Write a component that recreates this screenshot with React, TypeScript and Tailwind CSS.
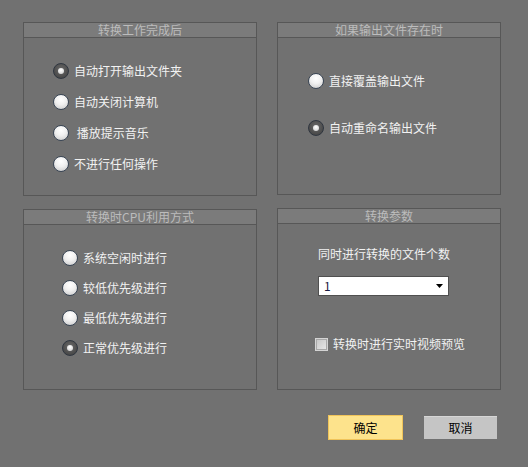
import { useState } from "react";

const font = { fontFamily: '"Noto Sans CJK SC", "Noto Sans", sans-serif' };

function Radio({ checked, label, onClick }: { checked: boolean; label: string; onClick: () => void }) {
  return (
    <div className="flex items-center cursor-default" onClick={onClick}>
      {checked ? (
        <span className="flex h-[16px] w-[16px] items-center justify-center rounded-full border border-[#2f3640] bg-[radial-gradient(circle_at_50%_40%,#6a6a6a,#3c3c3c)]">
          <span className="h-[6px] w-[6px] rounded-full bg-[radial-gradient(circle_at_50%_35%,#ffffff,#c8c8c8)]" />
        </span>
      ) : (
        <span className="h-[16px] w-[16px] rounded-full border border-[#3a4656] bg-[radial-gradient(circle_at_50%_30%,#ffffff,#f0f0f0_45%,#c6c6c6)]" />
      )}
      <span className="ml-[5px] whitespace-pre text-[12px] leading-[16px] text-[#f2f2f2]">{label}</span>
    </div>
  );
}

function Panel({ title, className, children }: { title: string; className: string; children: React.ReactNode }) {
  return (
    <div className={`flex flex-col border border-[#575757] ${className}`}>
      <div className="flex h-[15px] items-center justify-center border-b border-[#575757] bg-[#7b7b7b] text-[12px] leading-[14px] text-[#bcbcbc]">
        {title}
      </div>
      {children}
    </div>
  );
}

export default function App() {
  const [after, setAfter] = useState(0);
  const [exist, setExist] = useState(1);
  const [cpu, setCpu] = useState(3);
  const [preview, setPreview] = useState(false);

  const afterOpts = ["自动打开输出文件夹", "自动关闭计算机", " 播放提示音乐", "不进行任何操作"];
  const existOpts = ["直接覆盖输出文件", "自动重命名输出文件"];
  const cpuOpts = ["系统空闲时进行", "较低优先级进行", "最低优先级进行", "正常优先级进行"];

  return (
    <div className="h-[467px] w-[528px] bg-[#717171] pl-[23px] pt-[22px]" style={font}>
      <div className="grid grid-cols-[234px_224px] grid-rows-[174px_182px] gap-x-[20px] gap-y-[12px]">
        <Panel title="转换工作完成后" className="">
          <div className="flex flex-col pl-[29px] pt-[17px]">
            {afterOpts.map((o, i) => (
              <div key={o} className="flex h-[31px] items-center">
                <Radio checked={after === i} label={o} onClick={() => setAfter(i)} />
              </div>
            ))}
          </div>
        </Panel>

        <Panel title="如果输出文件存在时" className="h-[173px]">
          <div className="flex flex-col pl-[30px] pt-[19px]">
            {existOpts.map((o, i) => (
              <div key={o} className="flex h-[47px] items-center">
                <Radio checked={exist === i} label={o} onClick={() => setExist(i)} />
              </div>
            ))}
          </div>
        </Panel>

        <Panel title="转换时CPU利用方式" className="mt-[1px]">
          <div className="flex flex-col pl-[38px] pt-[18px]">
            {cpuOpts.map((o, i) => (
              <div key={o} className="flex h-[30px] items-center">
                <Radio checked={cpu === i} label={o} onClick={() => setCpu(i)} />
              </div>
            ))}
          </div>
        </Panel>

        <Panel title="转换参数" className="">
          <div className="flex flex-col pl-[40px]">
            <div className="mt-[22px] text-[12px] leading-[16px] text-[#f2f2f2]">同时进行转换的文件个数</div>
            <div className="mt-[14px] flex h-[20px] w-[131px] items-center justify-between border border-[#505050] bg-white pl-[5px] pr-[5px]">
              <span className="text-[12px] leading-[14px] text-[#1a1a40]">1</span>
              <svg width="7" height="4" viewBox="0 0 7 4">
                <path d="M0 0h7L3.5 4z" fill="#000" />
              </svg>
            </div>
            <div className="mt-[40px] -ml-[3px] flex items-center cursor-default" onClick={() => setPreview(!preview)}>
              <span className="flex h-[13px] w-[13px] items-center justify-center border border-[#d4d4d4] bg-[#a8a8a8]">
                <span className="flex h-[9px] w-[9px] items-center justify-center bg-[linear-gradient(135deg,#c8c8c8,#e6e6e6)] text-[9px] leading-none text-black">
                  {preview ? "✓" : ""}
                </span>
              </span>
              <span className="ml-[5px] text-[12px] leading-[16px] text-[#f2f2f2]">转换时进行实时视频预览</span>
            </div>
          </div>
        </Panel>
      </div>

      <div className="mt-[25px] flex w-[474px] justify-end gap-[21px]">
        <button className="h-[25px] w-[75px] border border-[#f0c45a] bg-[#fde38c] text-[12px] text-black">确定</button>
        <button className="mt-[1px] h-[23px] w-[73px] border-t border-[#d6d6d6] bg-[#c5c5c5] text-[12px] text-black">取消</button>
      </div>
    </div>
  );
}
